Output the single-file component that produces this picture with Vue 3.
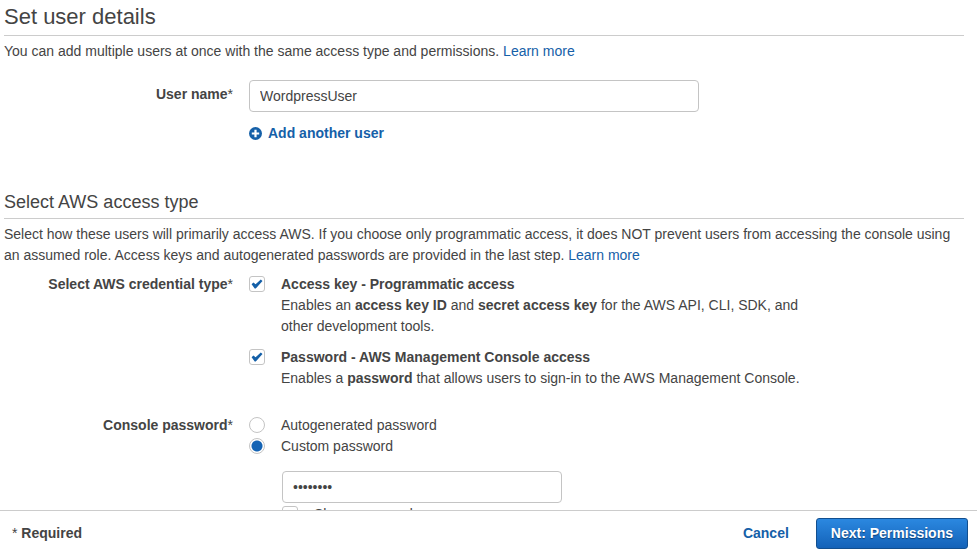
<script setup>
import { ref } from 'vue'

const userName = ref('WordpressUser')
const programmatic = ref(true)
const consoleAccess = ref(true)
const passwordMode = ref('custom')
const password = ref('password')
const showPassword = ref(false)
</script>

<template>
  <form class="page" @submit.prevent>
    <main class="content">
      <section class="section">
        <h1 class="title">Set user details</h1>
        <p class="intro">
          You can add multiple users at once with the same access type and permissions.
          <a href="#">Learn more</a>
        </p>
        <div class="row user-row">
          <label class="row-label user-label" for="user-name">User name<span class="star">*</span></label>
          <div class="row-body">
            <input id="user-name" v-model="userName" class="text-field" type="text" />
            <button class="add-user" type="button">
              <svg class="plus" viewBox="0 0 14 14" aria-hidden="true">
                <circle cx="6.5" cy="6.5" r="6.5" fill="#1560a8" />
                <path d="M6.5 2.8v7.4M2.8 6.5h7.4" stroke="#fff" stroke-width="2.2" />
              </svg>
              Add another user
            </button>
          </div>
        </div>
      </section>

      <section class="section">
        <h2 class="subtitle">Select AWS access type</h2>
        <p class="intro">
          Select how these users will primarily access AWS. If you choose only programmatic access, it does NOT
          prevent users from accessing the console using an assumed role. Access keys and autogenerated passwords
          are provided in the last step. <a href="#">Learn more</a>
        </p>

        <div class="row credential-row" role="group" aria-labelledby="credential-label">
          <div id="credential-label" class="row-label">Select AWS credential type<span class="star">*</span></div>
          <div class="row-body options">
            <div class="option">
              <input id="programmatic" v-model="programmatic" class="choice box" type="checkbox" />
              <div class="option-text">
                <label class="strong" for="programmatic">Access key - Programmatic access</label>
                <p>
                  Enables an <b>access key ID</b> and <b>secret access key</b> for the AWS API, CLI, SDK, and other
                  development tools.
                </p>
              </div>
            </div>
            <div class="option">
              <input id="console-access" v-model="consoleAccess" class="choice box" type="checkbox" />
              <div class="option-text">
                <label class="strong" for="console-access">Password - AWS Management Console access</label>
                <p>Enables a <b>password</b> that allows users to sign-in to the AWS Management Console.</p>
              </div>
            </div>
          </div>
        </div>

        <div class="row password-row" role="radiogroup" aria-labelledby="password-label">
          <div id="password-label" class="row-label">Console password<span class="star">*</span></div>
          <div class="row-body">
            <div class="option">
              <input id="auto" v-model="passwordMode" class="choice radio" type="radio" name="mode" value="auto" />
              <label for="auto">Autogenerated password</label>
            </div>
            <div class="option">
              <input id="custom" v-model="passwordMode" class="choice radio" type="radio" name="mode" value="custom" />
              <label for="custom">Custom password</label>
            </div>
            <div class="custom-password">
              <input
                v-model="password"
                class="text-field secret"
                :type="showPassword ? 'text' : 'password'"
                aria-label="Custom password"
              />
              <div class="option">
                <input id="show" v-model="showPassword" class="choice box" type="checkbox" />
                <label for="show">Show password</label>
              </div>
            </div>
          </div>
        </div>
      </section>
    </main>

    <footer class="footer">
      <span class="required"><span class="star">*</span> Required</span>
      <a class="cancel" href="#">Cancel</a>
      <button class="next" type="submit">Next: Permissions</button>
    </footer>
  </form>
</template>

<style>
body {
  background: #fff;
}
</style>

<style scoped>
.page {
  display: flex;
  flex-direction: column;
  height: 100vh;
  font: 14px/21px "Liberation Sans", Arial, sans-serif;
  color: #444;
}

h1,
h2,
p {
  margin: 0;
}

a {
  color: #1560a8;
  text-decoration: none;
}

.content {
  flex: 1;
  min-height: 0;
  overflow: hidden;
  padding: 3px 13px 0 4px;
}

.title,
.subtitle {
  font-weight: 400;
  border-bottom: 1px solid #ccc;
}

.title {
  font-size: 22px;
  line-height: 28px;
  padding-bottom: 4px;
}

.subtitle {
  font-size: 18px;
  line-height: 24px;
  padding-bottom: 4px;
  margin-top: 46px;
}

.intro {
  margin-top: 5px;
}

.row {
  display: grid;
  grid-template-columns: 229px minmax(0, 570px);
  column-gap: 16px;
}

.user-row {
  margin-top: 18px;
}

.credential-row {
  margin-top: 8px;
}

.password-row {
  margin-top: 26px;
}

.row-label {
  text-align: right;
  font-weight: 700;
}

.user-label {
  padding-top: 4px;
}

.star {
  font-weight: 400;
}

.text-field {
  display: block;
  box-sizing: border-box;
  width: 450px;
  max-width: 100%;
  height: 32px;
  padding: 0 10px;
  border: 1px solid #c4c4c4;
  border-radius: 4px;
  background: #fff;
  color: #444;
  font: inherit;
}

.add-user {
  display: flex;
  align-items: center;
  gap: 5px;
  margin-top: 11px;
  padding: 0;
  border: 0;
  background: none;
  color: #1560a8;
  font: inherit;
  font-weight: 700;
}

.plus {
  width: 14px;
  height: 14px;
}

.options {
  display: grid;
  row-gap: 10px;
}

.option {
  display: flex;
  align-items: flex-start;
  gap: 16px;
}

.option-text {
  max-width: 530px;
}

.strong {
  display: block;
  font-weight: 700;
}

.choice {
  appearance: none;
  flex: none;
  box-sizing: border-box;
  width: 16px;
  height: 16px;
  margin: 2px 0 0;
  border: 1px solid #c4c4c4;
  background: #fff;
}

.box {
  border-radius: 3px;
}

.box:checked {
  background: url("data:image/svg+xml,%3Csvg xmlns='http://www.w3.org/2000/svg' viewBox='0 0 14 14'%3E%3Cpath d='M1.6 7.2L3.4 5.4 5.6 7.3 10.8 2.6 12.5 4.1 5.8 11.6 4.7 11.5z' fill='%231560a8'/%3E%3C/svg%3E") center / 14px 14px no-repeat #fff;
}

.radio {
  border-radius: 50%;
}

.radio:checked {
  background: radial-gradient(circle, #1463b4 5px, #fff 6px);
}

.custom-password {
  margin: 14px 0 0 33px;
}

.secret {
  width: 280px;
}

.custom-password .option {
  margin-top: 1px;
}

.footer {
  display: flex;
  align-items: center;
  box-sizing: border-box;
  padding: 7px 9px 2px 12px;
  border-top: 1px solid #ccc;
  background: #fff;
  font-weight: 700;
}

.required {
  flex: 1;
}

.cancel {
  margin-right: 27px;
}

.next {
  box-sizing: border-box;
  height: 31px;
  padding: 0 14px;
  border: 1px solid #124f8f;
  border-radius: 3px;
  background: linear-gradient(#2b88e0, #1462b8);
  color: #fff;
  font: inherit;
  text-shadow: 0 1px 1px #0b3e75;
}
</style>
